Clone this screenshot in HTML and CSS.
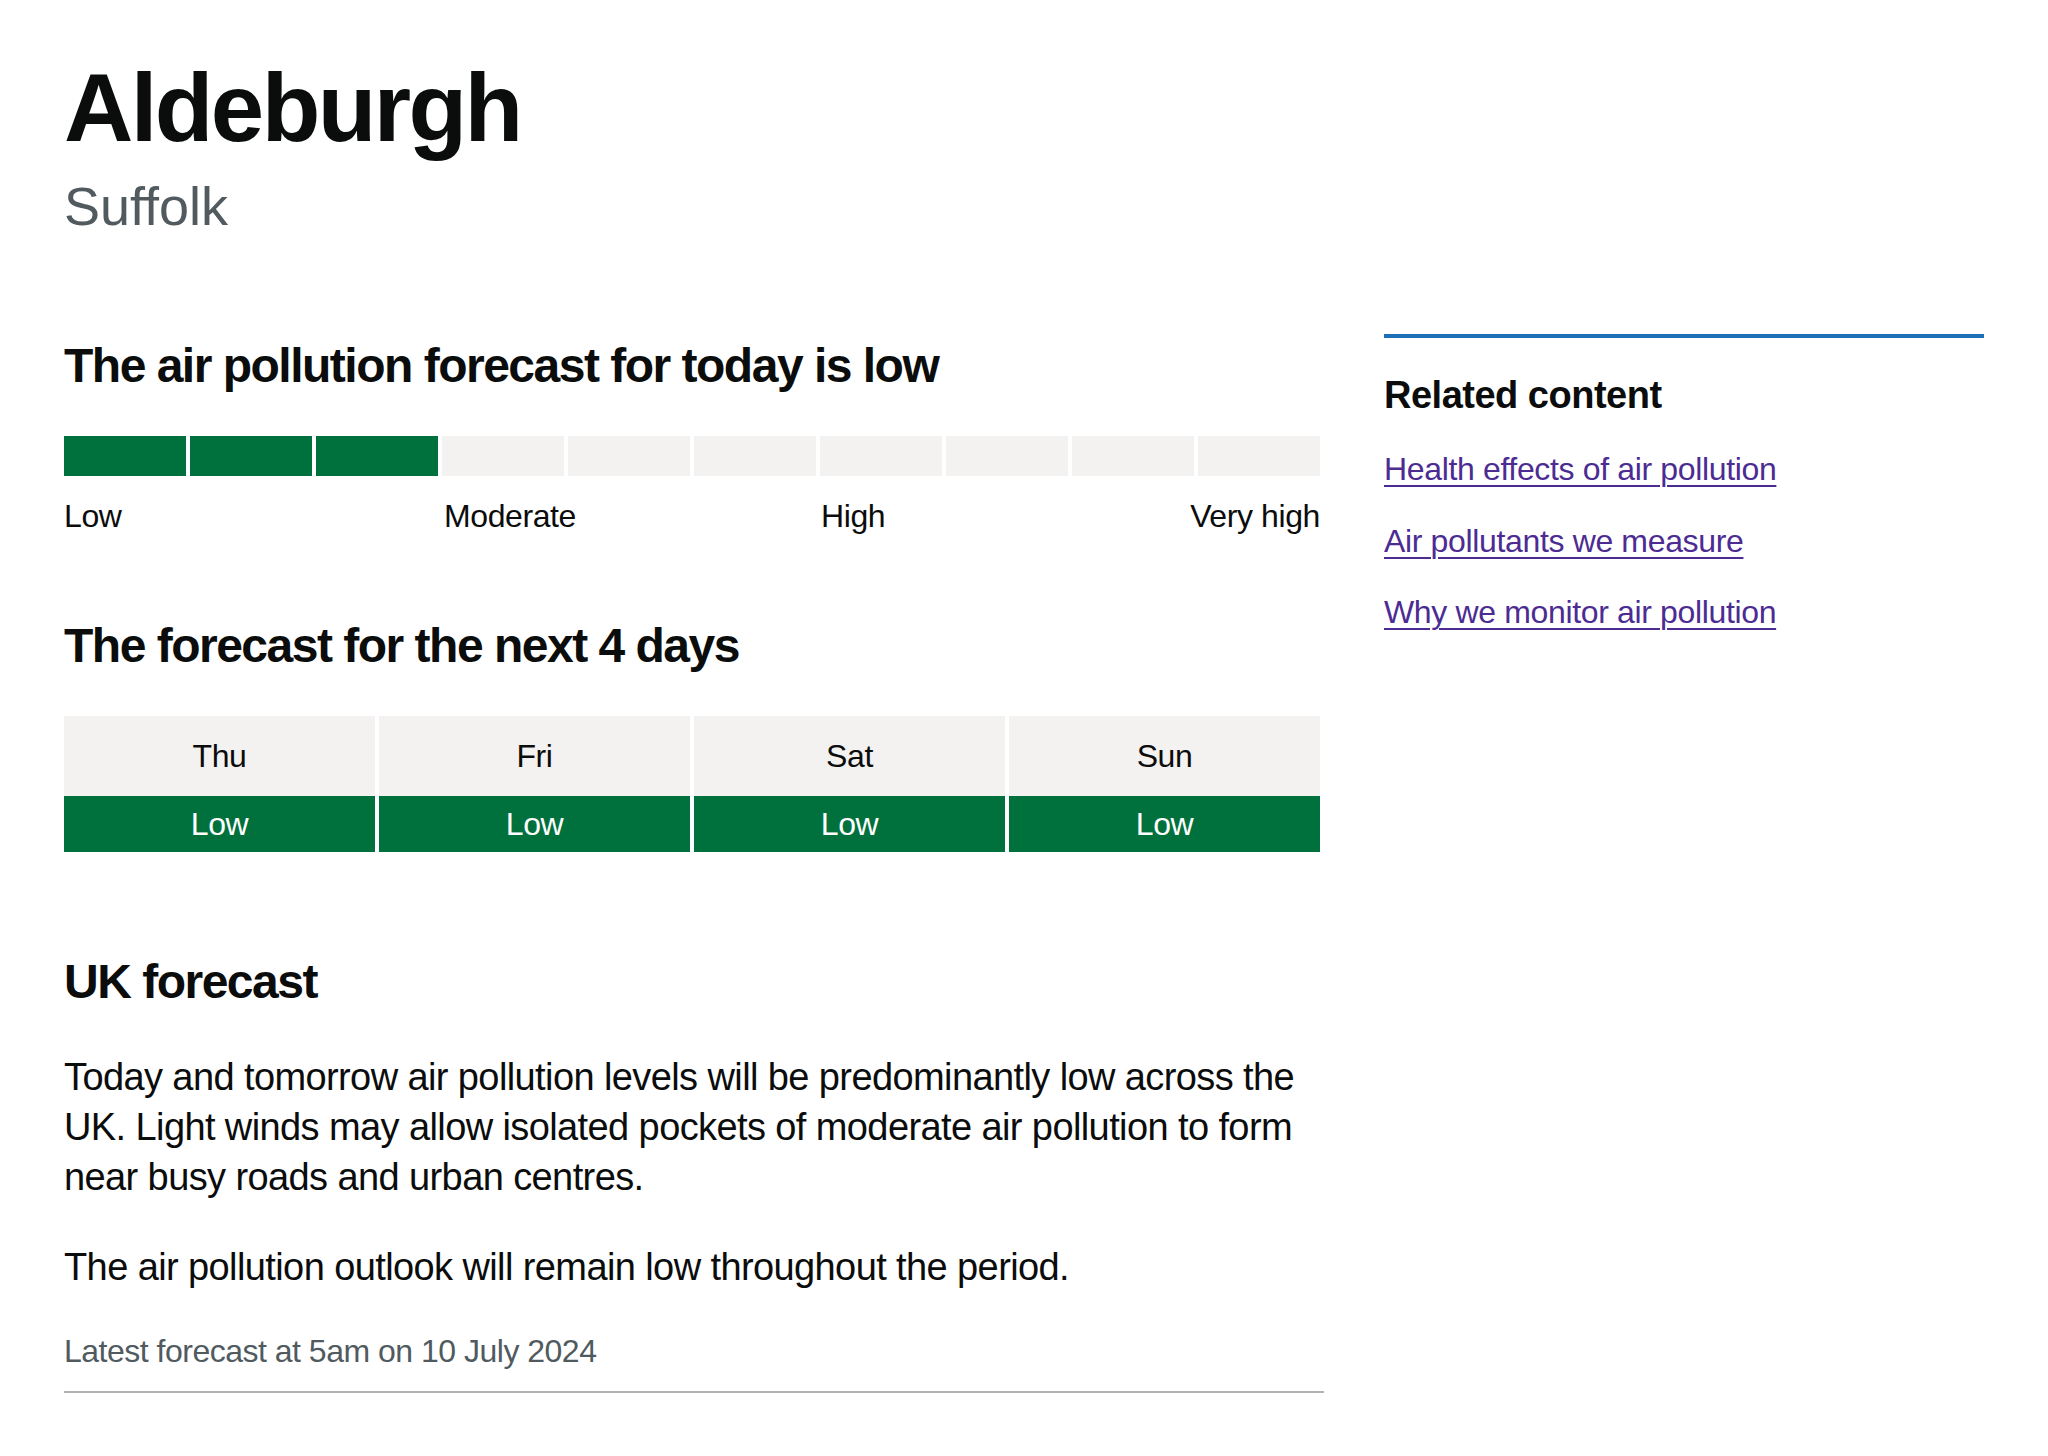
FILE: index.html
```html
<!DOCTYPE html>
<html lang="en">
<head>
<meta charset="utf-8">
<title>Aldeburgh air pollution forecast</title>
<link rel="stylesheet" href="styles.css">
</head>
<body>
<div class="page">
  <header class="title-block">
    <h1 class="title">Aldeburgh</h1>
    <p class="caption">Suffolk</p>
  </header>
  <div class="columns">
    <main class="main-col">
      <h2 class="heading heading-today">The air pollution forecast for today is low</h2>
      <div class="daqi-bar">
        <span class="seg seg-on"></span>
        <span class="seg seg-on"></span>
        <span class="seg seg-on"></span>
        <span class="seg"></span>
        <span class="seg"></span>
        <span class="seg"></span>
        <span class="seg"></span>
        <span class="seg"></span>
        <span class="seg"></span>
        <span class="seg"></span>
      </div>
      <div class="daqi-labels">
        <span class="lbl lbl-low">Low</span>
        <span class="lbl lbl-mod">Moderate</span>
        <span class="lbl lbl-high">High</span>
        <span class="lbl lbl-vhigh">Very high</span>
      </div>

      <h2 class="heading heading-days">The forecast for the next 4 days</h2>
      <div class="days">
        <div class="day-head">Thu</div>
        <div class="day-head">Fri</div>
        <div class="day-head">Sat</div>
        <div class="day-head">Sun</div>
        <div class="day-val">Low</div>
        <div class="day-val">Low</div>
        <div class="day-val">Low</div>
        <div class="day-val">Low</div>
      </div>

      <h2 class="heading heading-uk">UK forecast</h2>
      <p class="body">Today and tomorrow air pollution levels will be predominantly low across the UK. Light winds may allow isolated pockets of moderate air pollution to form near busy roads and urban centres.</p>
      <p class="body">The air pollution outlook will remain low throughout the period.</p>
      <div class="meta">
        <p class="meta-text">Latest forecast at 5am on 10 July 2024</p>
      </div>
    </main>
    <aside class="related">
      <h2 class="related-title">Related content</h2>
      <ul class="related-list">
        <li><a class="link" href="#">Health effects of air pollution</a></li>
        <li><a class="link" href="#">Air pollutants we measure</a></li>
        <li><a class="link" href="#">Why we monitor air pollution</a></li>
      </ul>
    </aside>
  </div>
</div>
</body>
</html>
```
FILE: styles.css
```css
* { box-sizing: border-box; }
html, body { margin: 0; padding: 0; background: #ffffff; }
body {
  font-family: "Liberation Sans", Arial, sans-serif;
  color: #0b0c0c;
}
.page {
  padding: 58px 64px 40px 64px;
  width: 2048px;
}
.title-block { margin: 0; }
.title {
  margin: 0;
  font-size: 96px;
  line-height: 100px;
  font-weight: 700;
  letter-spacing: -2.6px;
}
.caption {
  margin: 18px 0 0 0;
  font-size: 54px;
  line-height: 60px;
  color: #505a5f;
  letter-spacing: 0;
}
.columns {
  display: flex;
  gap: 62px;
  margin-top: 100px;
  align-items: flex-start;
}
.main-col { width: 1258px; flex: none; }
.heading {
  margin: 0;
  font-size: 48px;
  line-height: 60px;
  font-weight: 700;
  letter-spacing: -1.5px;
}
.daqi-bar {
  margin-top: 40px;
  display: grid;
  grid-template-columns: repeat(10, 1fr);
  column-gap: 4px;
  width: 1256px;
  height: 40px;
}
.seg { background: #f3f2f1; }
.seg-on { background: #00703c; }
.daqi-labels {
  margin-top: 20px;
  display: grid;
  grid-template-columns: repeat(10, 1fr);
  column-gap: 4px;
  width: 1256px;
  font-size: 32px;
  line-height: 40px;
  letter-spacing: -0.4px;
}
.lbl-low { grid-column: 1 / 4; }
.lbl-mod { grid-column: 4 / 7; padding-left: 2px; }
.lbl-high { grid-column: 7 / 8; padding-left: 1px; }
.lbl-vhigh { grid-column: 8 / 11; text-align: right; }
.heading-days { margin-top: 80px; }
.days {
  margin-top: 40px;
  display: grid;
  grid-template-columns: repeat(4, 1fr);
  column-gap: 4px;
  width: 1256px;
  font-size: 32px;
  line-height: 40px;
  text-align: center;
  letter-spacing: -0.4px;
}
.day-head {
  background: #f3f2f1;
  padding: 20px 0;
}
.day-val {
  background: #00703c;
  color: #ffffff;
  padding: 8px 0;
}
.heading-uk { margin-top: 100px; }
.body {
  margin: 40px 0 0 0;
  font-size: 38px;
  line-height: 50px;
  letter-spacing: -0.6px;
}
.body + .body { margin-top: 40px; }
.meta {
  margin-top: 39px;
  padding-bottom: 20px;
  border-bottom: 2px solid #b1b4b6;
  width: 1260px;
}
.meta-text {
  margin: 0;
  font-size: 32px;
  line-height: 40px;
  color: #505a5f;
  letter-spacing: -0.5px;
}
.related {
  width: 600px;
  flex: none;
  margin-top: -2px;
  border-top: 4px solid #1d70b8;
  padding-top: 32px;
}
.related-title {
  margin: 0;
  font-size: 38px;
  line-height: 50px;
  font-weight: 700;
  letter-spacing: -0.5px;
}
.related-list {
  list-style: none;
  margin: 29px 0 0 0;
  padding: 0;
  font-size: 32px;
  line-height: 40px;
  letter-spacing: -0.35px;
}
.related-list li { margin: 0 0 31.5px 0; }
.link {
  color: #4c2c92;
  text-decoration: underline;
  text-decoration-thickness: 2px;
  text-underline-offset: 5px;
}
```
